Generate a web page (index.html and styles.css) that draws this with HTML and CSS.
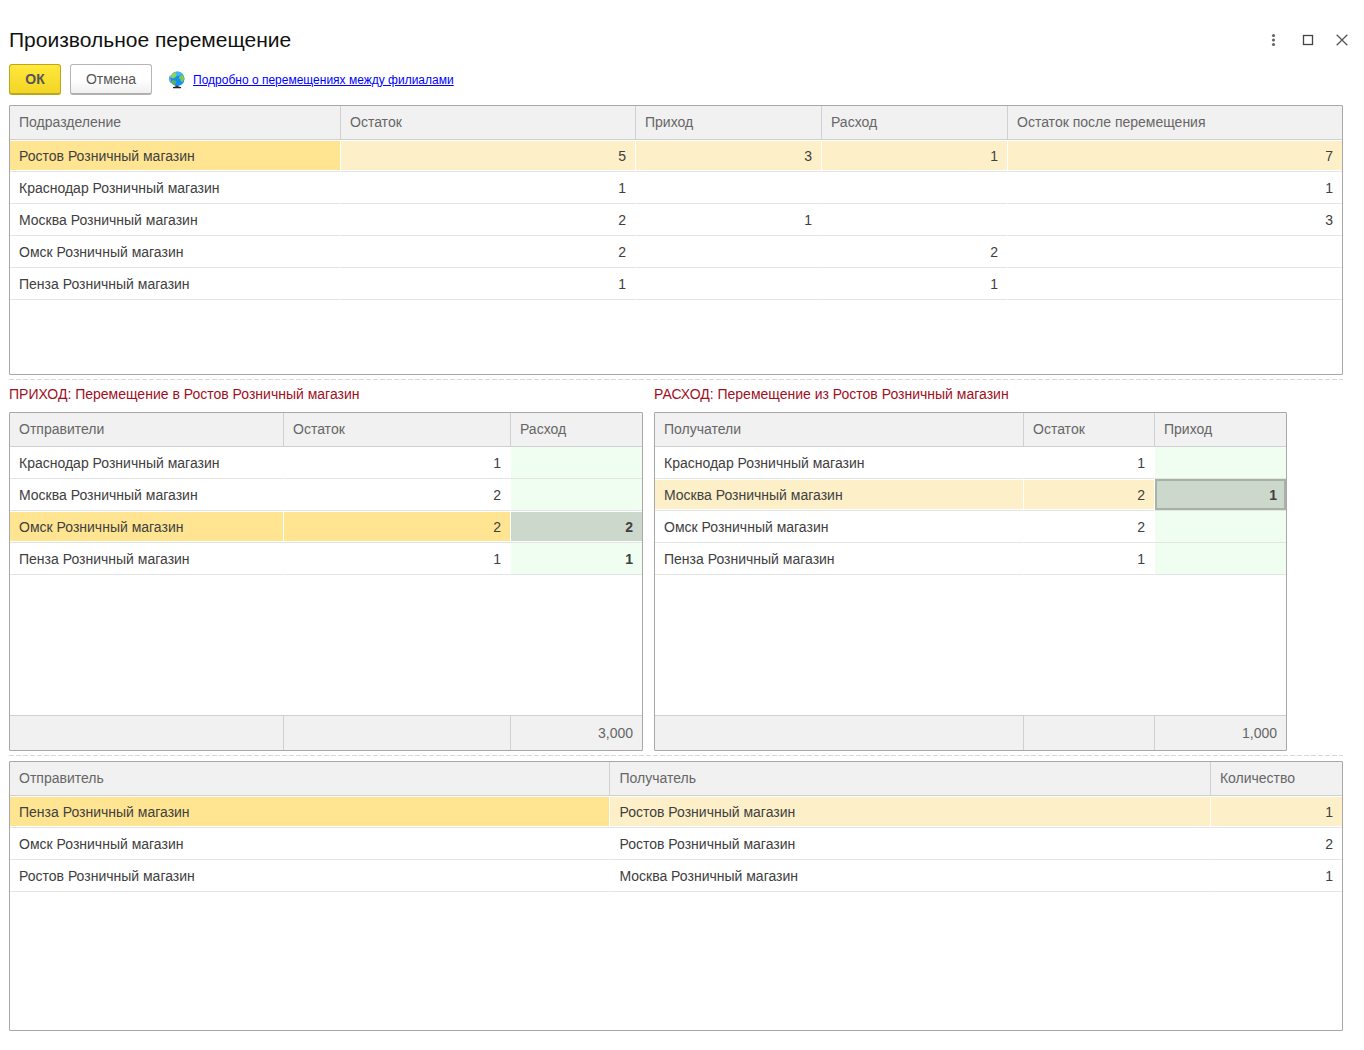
FILE: index.html
```html
<!DOCTYPE html>
<html lang="ru">
<head>
    <meta charset="UTF-8">
    <meta name="viewport" content="width=device-width, initial-scale=1.0">
    <title>Произвольное перемещение</title>
    <link rel="stylesheet" href="styles.css">
</head>
<body>
    <header class="titlebar">
        <h1>Произвольное перемещение</h1>
        <div class="window-buttons">
            <button type="button" aria-label="Ещё">
                <svg width="14" height="14" viewBox="0 0 14 14" fill="#666"><circle cx="6.500" cy="2.500" r="1.600"/><circle cx="6.500" cy="7" r="1.600"/><circle cx="6.500" cy="11.500" r="1.600"/></svg>
            </button>
            <button type="button" aria-label="Развернуть">
                <svg width="14" height="14" viewBox="0 0 14 14"><rect x="2.500" y="2.500" width="9" height="9" fill="none" stroke="#444" stroke-width="1.300"/></svg>
            </button>
            <button type="button" aria-label="Закрыть">
                <svg width="14" height="14" viewBox="0 0 14 14"><path d="M1.700 1.700l10.600 10.600M12.300 1.700L1.700 12.300" stroke="#555" stroke-width="1.300"/></svg>
            </button>
        </div>
    </header>

    <div class="toolbar">
        <button type="button" class="btn btn-ok">ОК</button>
        <button type="button" class="btn btn-cancel">Отмена</button>
        <svg class="globe" width="18" height="18" viewBox="0 0 18 18">
            <path d="M5 16q4-1.200 8 0v1.300H5z" fill="#1c1c1c"/>
            <path d="M7.500 14h3v2.500h-3z" fill="#333"/>
            <circle cx="9.300" cy="7.800" r="7.200" fill="#1590ee"/>
            <path d="M8 1q4-1 6.300 1.500L11 5 8.500 4z" fill="#40b8fb"/>
            <path d="M3.500 3.600q2-2.400 4.800-2.600l-.5 2 1.500 1-2 2.200L5 7.500 2.600 6z" fill="#8fd45a"/>
            <path d="M11.500 5.500l2.500-2.300q2.300 2 2.500 4.800l-2 3-1.600-.5-.5-2.500-1.500-.5z" fill="#7ccb50"/>
            <path d="M4.600 9l3 .8.400 2-1.500 2.200q-2.500-1-3.300-3z" fill="#62b648"/>
            <path d="M2.200 4.500Q.2 8.500 2.600 11.800" fill="none" stroke="#2c7fb8" stroke-width=".8"/>
        </svg>
        <a href="#" class="help-link">Подробно о перемещениях между филиалами</a>
    </div>

    <div class="grid">
        <table>
            <colgroup>
                <col class="w-unit"><col class="w-rest"><col class="w-move"><col class="w-move"><col class="w-after">
            </colgroup>
            <thead>
                <tr><th>Подразделение</th><th>Остаток</th><th>Приход</th><th>Расход</th><th>Остаток после перемещения</th></tr>
            </thead>
            <tbody>
                <tr class="selected"><td class="current">Ростов Розничный магазин</td><td class="num">5</td><td class="num">3</td><td class="num">1</td><td class="num">7</td></tr>
                <tr><td>Краснодар Розничный магазин</td><td class="num">1</td><td class="num"></td><td class="num"></td><td class="num">1</td></tr>
                <tr><td>Москва Розничный магазин</td><td class="num">2</td><td class="num">1</td><td class="num"></td><td class="num">3</td></tr>
                <tr><td>Омск Розничный магазин</td><td class="num">2</td><td class="num"></td><td class="num">2</td><td class="num"></td></tr>
                <tr><td>Пенза Розничный магазин</td><td class="num">1</td><td class="num"></td><td class="num">1</td><td class="num"></td></tr>
            </tbody>
        </table>
    </div>

    <div class="splitter"></div>

    <div class="panels">
        <section class="panel">
            <h2>ПРИХОД: Перемещение в Ростов Розничный магазин</h2>
            <div class="grid grid-totals">
                <table>
                    <colgroup>
                        <col class="w-sender"><col class="w-sender-rest"><col class="w-qty">
                    </colgroup>
                    <thead>
                        <tr><th>Отправители</th><th>Остаток</th><th>Расход</th></tr>
                    </thead>
                    <tbody>
                        <tr><td>Краснодар Розничный магазин</td><td class="num">1</td><td class="num edit"></td></tr>
                        <tr><td>Москва Розничный магазин</td><td class="num">2</td><td class="num edit"></td></tr>
                        <tr class="selected active"><td>Омск Розничный магазин</td><td class="num">2</td><td class="num edit">2</td></tr>
                        <tr><td>Пенза Розничный магазин</td><td class="num">1</td><td class="num edit">1</td></tr>
                        <tr class="filler"><td colspan="3"></td></tr>
                    </tbody>
                    <tfoot>
                        <tr><td></td><td></td><td class="num">3,000</td></tr>
                    </tfoot>
                </table>
            </div>
        </section>

        <section class="panel">
            <h2>РАСХОД: Перемещение из Ростов Розничный магазин</h2>
            <div class="grid grid-totals">
                <table>
                    <colgroup>
                        <col class="w-receiver"><col class="w-qty"><col class="w-qty">
                    </colgroup>
                    <thead>
                        <tr><th>Получатели</th><th>Остаток</th><th>Приход</th></tr>
                    </thead>
                    <tbody>
                        <tr><td>Краснодар Розничный магазин</td><td class="num">1</td><td class="num edit"></td></tr>
                        <tr class="selected"><td>Москва Розничный магазин</td><td class="num">2</td><td class="num edit focused">1</td></tr>
                        <tr><td>Омск Розничный магазин</td><td class="num">2</td><td class="num edit"></td></tr>
                        <tr><td>Пенза Розничный магазин</td><td class="num">1</td><td class="num edit"></td></tr>
                        <tr class="filler"><td colspan="3"></td></tr>
                    </tbody>
                    <tfoot>
                        <tr><td></td><td></td><td class="num">1,000</td></tr>
                    </tfoot>
                </table>
            </div>
        </section>
    </div>

    <div class="splitter"></div>

    <div class="grid">
        <table>
            <colgroup>
                <col class="w-side"><col class="w-side"><col class="w-qty">
            </colgroup>
            <thead>
                <tr><th>Отправитель</th><th>Получатель</th><th>Количество</th></tr>
            </thead>
            <tbody>
                <tr class="selected"><td class="current">Пенза Розничный магазин</td><td>Ростов Розничный магазин</td><td class="num">1</td></tr>
                <tr><td>Омск Розничный магазин</td><td>Ростов Розничный магазин</td><td class="num">2</td></tr>
                <tr><td>Ростов Розничный магазин</td><td>Москва Розничный магазин</td><td class="num">1</td></tr>
            </tbody>
        </table>
    </div>
</body>
</html>
```
FILE: styles.css
```css
* {
    box-sizing: border-box;
}
body {
    margin: 0;
    padding: 26px 21px 19px 9px;
    background: #fff;
    color: #404040;
    font-family: "Liberation Sans", Arial, sans-serif;
    font-size: 14px;
}

/* Заголовок окна */
.titlebar {
    display: flex;
    justify-content: space-between;
    align-items: center;
    height: 28px;
}
h1 {
    margin: 0;
    font-size: 21px;
    font-weight: normal;
    color: #111;
}
.window-buttons {
    display: flex;
    gap: 20px;
    margin-right: -6px;
}
.window-buttons button {
    width: 14px;
    height: 14px;
    padding: 0;
    border: none;
    background: none;
    cursor: pointer;
}
.window-buttons svg {
    display: block;
}

.toolbar {
    display: flex;
    align-items: center;
    margin: 10px 0;
}
.btn {
    height: 31px;
    border: 1px solid #b5b5b5;
    border-bottom: 2px solid #b0b0b0;
    border-radius: 3px;
    font-family: inherit;
    font-size: 14px;
    color: #555;
    cursor: pointer;
}
.btn-ok {
    width: 52px;
    margin-right: 9px;
    background: linear-gradient(#ffe83c, #f2d526);
    border-color: #bda61c;
    font-weight: bold;
}
.btn-cancel {
    width: 82px;
    background: linear-gradient(#fff 50%, #f0f0f0);
}
.globe {
    margin: 0 7px 0 16px;
}
.help-link {
    font-size: 12px;
    color: #0000ff;
}

/* Таблицы */
.grid {
    min-height: 270px;
    border: 1px solid #a8a8a8;
    border-radius: 1px;
}
.grid-totals {
    height: 339px;
}
.grid-totals table {
    height: 337px;
}
table {
    width: 100%;
    table-layout: fixed;
    border-collapse: separate;
    border-spacing: 0;
}
th,
td {
    padding: 0 9px;
    text-align: left;
    font-weight: normal;
    white-space: nowrap;
}
th {
    height: 34px;
    padding-bottom: 1px;
    background: #f1f1f1;
    border-right: 1px solid #d0d0d0;
    border-bottom: 1px solid #d0d0d0;
    color: #666;
}
td {
    height: 32px;
    padding-top: 1px;
    border-right: 1px solid transparent;
    border-bottom: 1px solid #e4e4e4;
}
th:last-child,
td:last-child {
    border-right: none;
}
.num {
    text-align: right;
}
.selected td {
    background: #fdf0c8;
    border-right-color: #fff;
    box-shadow: inset 0 1px #fff, inset 0 -1px #fff;
}
.selected .current,
.active td {
    background: #ffe591;
}
td.edit {
    background: #f0fef1;
    font-weight: bold;
}
.selected td.edit {
    background: #cdd8cc;
}
.selected td.focused {
    box-shadow: inset 0 0 0 2px #a6b2a6;
}
.filler td {
    height: auto;
    border: none;
}
tfoot td {
    height: 35px;
    padding-top: 0;
    background: #f1f1f1;
    border-top: 1px solid #d0d0d0;
    border-right-color: #d0d0d0;
    border-bottom: none;
    color: #666;
}

.w-unit { width: 331px; }
.w-rest { width: 295px; }
.w-move { width: 186px; }
.w-after { width: 334px; }
.w-sender { width: 274px; }
.w-sender-rest { width: 227px; }
.w-receiver { width: 369px; }
.w-side { width: 600px; }
.w-qty { width: 131px; }

.splitter {
    height: 1px;
    margin: 4px 0 5px;
    background: repeating-linear-gradient(90deg, #d8d8d8 0 5px, transparent 5px 7px);
}

/* Приход и расход */
.panels {
    display: flex;
    gap: 11px;
    padding-right: 56px;
}
.panel {
    flex: 1;
}
h2 {
    margin: 0;
    height: 27px;
    line-height: 18px;
    font-size: 14px;
    font-weight: normal;
    color: #a00f1e;
}
```
